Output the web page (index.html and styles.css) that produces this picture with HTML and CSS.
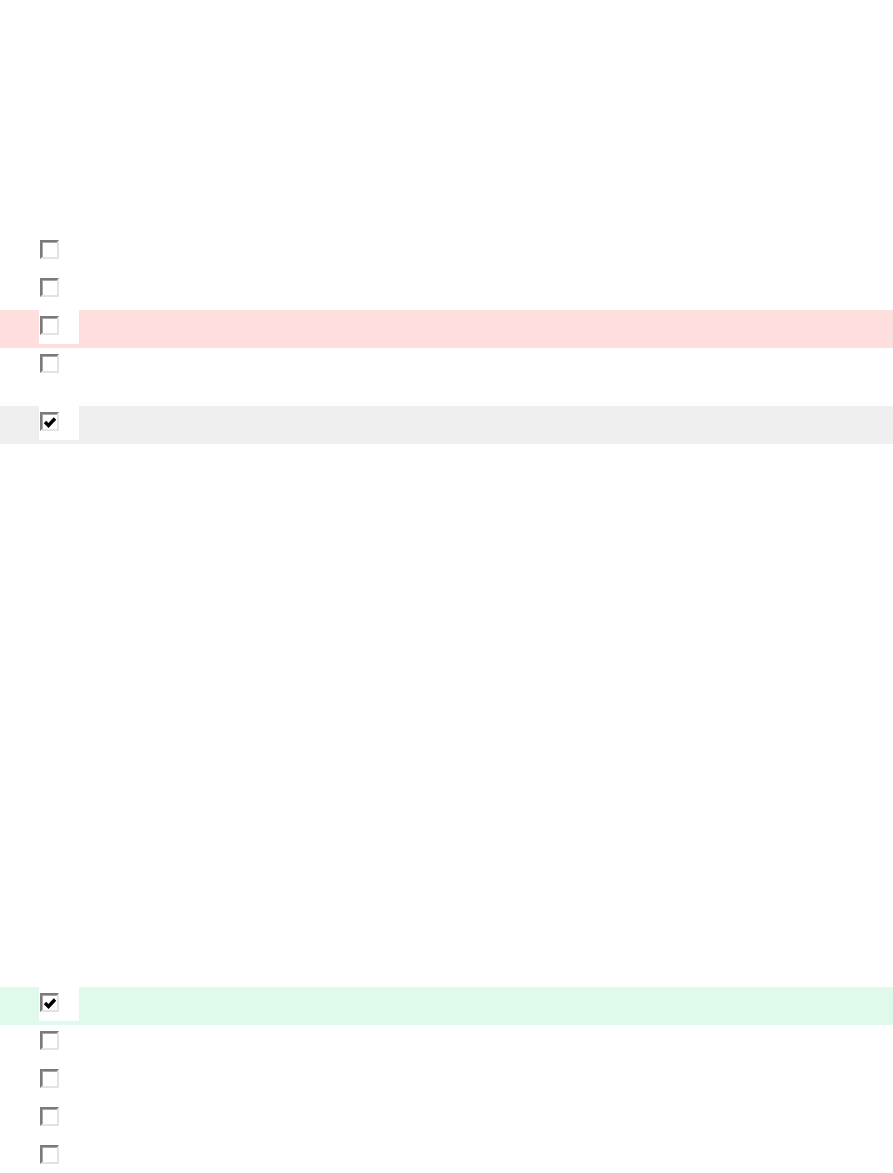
FILE: index.html
```html
<!DOCTYPE html>
<html lang="en">
    <head>
        <meta charset="UTF-8">
        <meta name="viewport" content="width=device-width, initial-scale=1.0">
        <title>Inbox</title>
        <link rel="stylesheet" href="styles.css">
    </head>

    <body>
        <div class="list" id="listTop">
            <div class="row"><div class="lead"></div><div class="cell"><span class="box"></span></div><div class="rest"></div></div>
            <div class="row"><div class="lead"></div><div class="cell"><span class="box"></span></div><div class="rest"></div></div>
            <div class="row unread"><div class="lead"></div><div class="cell"><span class="box"></span></div><div class="rest"></div></div>
            <div class="row tall"><div class="lead"></div><div class="cell"><span class="box"></span></div><div class="rest"></div></div>
            <div class="row picked">
                <div class="lead"></div>
                <div class="cell">
                    <span class="box">
                        <svg width="14" height="14" viewBox="0 0 14 14"><polyline points="2,7 5.5,10.5 12,3.5" fill="none" stroke="#000" stroke-width="3.4"/></svg>
                    </span>
                </div>
                <div class="rest"></div>
            </div>
        </div>

        <div class="list" id="listBottom">
            <div class="row done">
                <div class="lead"></div>
                <div class="cell">
                    <span class="box">
                        <svg width="14" height="14" viewBox="0 0 14 14"><polyline points="2,7 5.5,10.5 12,3.5" fill="none" stroke="#000" stroke-width="3.4"/></svg>
                    </span>
                </div>
                <div class="rest"></div>
            </div>
            <div class="row"><div class="lead"></div><div class="cell"><span class="box"></span></div><div class="rest"></div></div>
            <div class="row"><div class="lead"></div><div class="cell"><span class="box"></span></div><div class="rest"></div></div>
            <div class="row"><div class="lead"></div><div class="cell"><span class="box"></span></div><div class="rest"></div></div>
            <div class="row"><div class="lead"></div><div class="cell"><span class="box"></span></div><div class="rest"></div></div>
        </div>
    </body>
</html>
```

FILE: styles.css
```css
body{
    margin: 0;
    background: #ffffff;
    font-family: "Liberation Sans", Arial, sans-serif;
}

#listTop{
    padding-top: 234px;
}

#listBottom{
    padding-top: 543px;
}

.row{
    display: grid;
    grid-template-columns: 39px 40px 1fr;
    height: 38px;
    box-sizing: border-box;
    padding-bottom: 4px;
}

.row.tall{
    height: 58px;
}

.unread{
    background-color: #ffdfdd;
}

.picked{
    background-color: #efefef;
}

.done{
    background-color: #dffaea;
}

.cell{
    background-color: #ffffff;
    padding-top: 6px;
}

.box{
    display: block;
    width: 19px;
    height: 19px;
    margin-left: 1px;
    box-sizing: border-box;
    border: 2px solid;
    border-color: #7a7a7a #e3e3e3 #e3e3e3 #7a7a7a;
    box-shadow: inset 1px 1px 0 #a8a8a8;
    background: #ffffff;
}

.box svg{
    display: block;
    margin: 1px 0 0 1px;
}
```
